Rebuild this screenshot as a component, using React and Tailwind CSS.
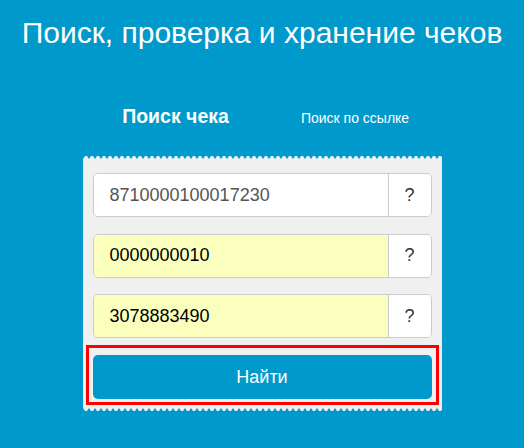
import React from "react";

function Teeth({ flip }) {
  const id = flip ? "zb" : "zt";
  return (
    <svg width="100%" height="3" className="block" preserveAspectRatio="none">
      <defs>
        <pattern id={id} width="6" height="3" patternUnits="userSpaceOnUse">
          {flip ? (
            <path d="M0 0 L6 0 L4 3 L2 3 Z" fill="#f0f0f0" />
          ) : (
            <path d="M0 3 L2 0 L4 0 L6 3 Z" fill="#f0f0f0" />
          )}
        </pattern>
      </defs>
      <rect width="100%" height="3" fill={`url(#${id})`} />
    </svg>
  );
}

function Field({ value, yellow, gray }) {
  return (
    <div className="flex h-[44px] rounded-[5px] border border-[#cccccc] overflow-hidden">
      <div
        className={`flex-1 flex items-center pl-[16px] text-[18px] ${yellow ? "bg-[#faffbd]" : "bg-white"} ${gray ? "text-[#555555]" : "text-black"}`}
      >
        {value}
      </div>
      <div className="w-[43px] border-l border-[#cccccc] bg-white flex items-center justify-center text-[18px] text-[#333333]">
        ?
      </div>
    </div>
  );
}

export default function App() {
  return (
    <div className="w-[524px] h-[448px] bg-[#0099cc] overflow-hidden font-['Liberation_Sans',Arial,sans-serif]">
      <h1 className="pt-[18px] text-center text-white text-[30px] leading-[30px]">
        Поиск, проверка и хранение чеков
      </h1>
      <div className="w-[359px] mx-auto mt-[57px] flex items-baseline text-white">
        <div className="w-[186px] text-center font-bold text-[19.5px] leading-[22px]">Поиск чека</div>
        <div className="flex-1 text-center text-[14px] leading-[22px]">Поиск по ссылке</div>
      </div>
      <div className="w-[359px] mx-auto mt-[27px]">
        <Teeth />
        <div className="bg-[#f0f0f0] px-[10px] pt-[14px] pb-[9px] flex flex-col">
          <div className="flex flex-col gap-[16.5px]">
            <Field value="8710000100017230" gray />
            <Field value="0000000010" yellow />
            <Field value="3078883490" yellow />
          </div>
          <div className="relative mt-[17px]">
            <div className="h-[44px] rounded-[5px] bg-[#0099cc] flex items-center justify-center text-white text-[18px]">
              Найти
            </div>
            <div className="absolute -left-[7px] -top-[10px] -right-[7px] -bottom-[6px] border-[3px] border-[#ff0000]"></div>
          </div>
        </div>
        <Teeth flip />
      </div>
    </div>
  );
}
